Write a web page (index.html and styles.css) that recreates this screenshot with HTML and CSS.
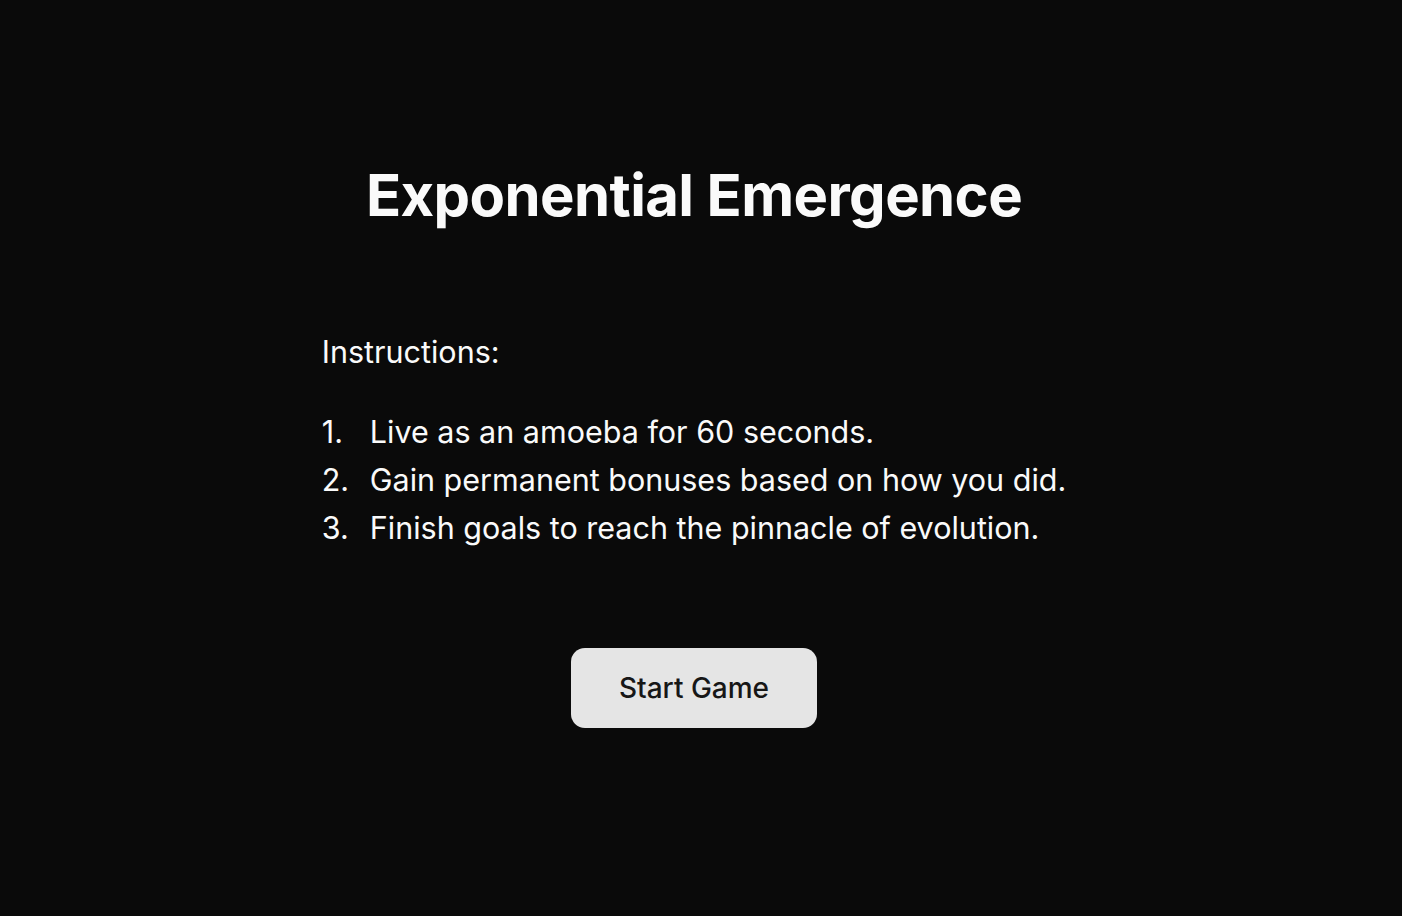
FILE: index.html
```html
<!DOCTYPE html>
<html lang="en">
<head>
<meta charset="utf-8">
<title>Exponential Emergence</title>
<link rel="stylesheet" href="styles.css">
</head>
<body>
<main class="screen">
  <h1 class="title">Exponential Emergence</h1>
  <section class="instructions">
    <p class="label">Instructions:</p>
    <ol class="steps">
      <li><span class="num">1.</span><span>Live as an amoeba for 60 seconds.</span></li>
      <li><span class="num">2.</span><span>Gain permanent bonuses based on how you did.</span></li>
      <li><span class="num">3.</span><span>Finish goals to reach the pinnacle of evolution.</span></li>
    </ol>
  </section>
  <button class="start">Start Game</button>
</main>
</body>
</html>
```
FILE: styles.css
```css
html, body {
  margin: 0;
  padding: 0;
  background: #0a0a0a;
  height: 100%;
}
body {
  font-family: Inter, "Noto Sans", sans-serif;
  color: #fafafa;
}
.screen {
  display: flex;
  flex-direction: column;
  align-items: center;
  padding: 158px 14px 0 0;
}
.title {
  margin: 0;
  font-size: 58px;
  font-weight: 700;
  line-height: 74px;
  letter-spacing: -0.6px;
}
.instructions {
  margin-top: 96px;
  width: fit-content;
}
.label {
  margin: 0;
  font-size: 30.5px;
  line-height: 48px;
}
.steps {
  list-style: none;
  margin: 32px 0 0;
  padding: 0;
  font-size: 30.5px;
  line-height: 48px;
}
.steps li {
  display: flex;
}
.num {
  width: 48px;
}
.start {
  margin-top: 96px;
  width: 246px;
  height: 80px;
  border: none;
  border-radius: 14px;
  background: #e5e5e5;
  color: #171717;
  font-family: Inter, "Noto Sans", sans-serif;
  font-size: 28px;
  font-weight: 500;
}
```
